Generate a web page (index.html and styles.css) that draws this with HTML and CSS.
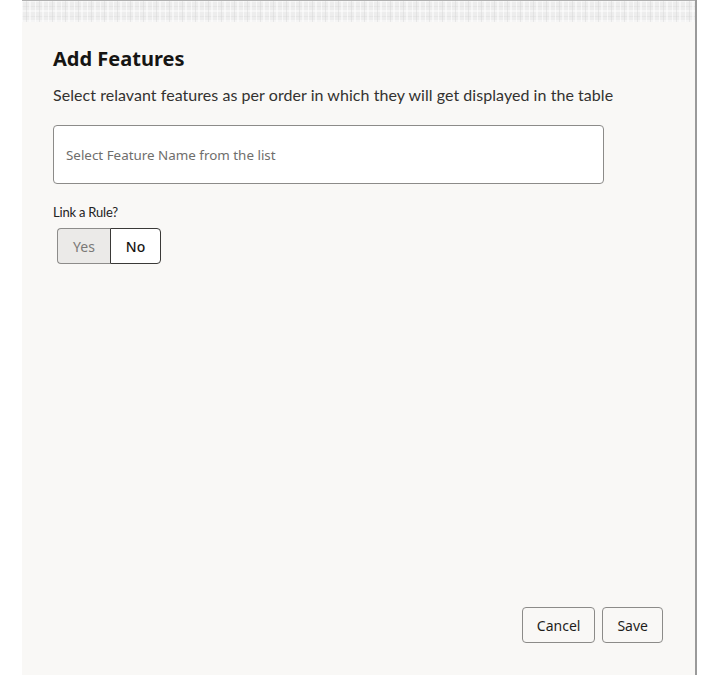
FILE: index.html
```html
<!doctype html>
<html>
<head>
<meta charset="utf-8">
<meta name="viewport" content="width=device-width, initial-scale=1">
<title>Add Features</title>
<link rel="stylesheet" href="styles.css">
</head>

<body>
<div class="panel">
	<div class="topband"></div>
	<div class="content">
		<h1>Add Features</h1>
		<p class="intro">Select relavant features as per order in which they will get displayed in the table</p>

		<div class="field">
			<input type="text" placeholder="Select Feature Name from the list">
		</div>

		<div class="label">Link a Rule?</div>
		<div class="toggle">
			<button class="seg off">Yes</button>
			<button class="seg on">No</button>
		</div>
	</div>

	<div class="footer">
		<button class="btn">Cancel</button>
		<button class="btn">Save</button>
	</div>
</div>
</body>
</html>
```

FILE: styles.css
```css
html, body{
	margin:0;
	padding:0;
	height:100%;
	background-color:#fff;
	}
body{
	font-family:"Noto Sans", "Open Sans", Arial, sans-serif;
	color:#161513;
	overflow:hidden;
	}
.panel{
	margin-left:22px;
	width:673px;
	height:675px;
	background-color:#f9f8f6;
	border-right:2px solid #9a9a9a;
	display:flex;
	flex-direction:column;
	}
.topband{
	height:21px;
	border-top:1px solid #b0b0b0;
	background-color:#ededed;
	background-image:
		repeating-linear-gradient(90deg, rgba(255,255,255,.6) 0 1px, transparent 1px 4px, rgba(210,210,210,.4) 4px 5px, transparent 5px 7px, rgba(255,255,255,.5) 7px 9px, transparent 9px 13px),
		repeating-linear-gradient(0deg, rgba(255,255,255,.45) 0 2px, transparent 2px 5px, rgba(215,215,215,.35) 5px 6px, transparent 6px 10px);
	}
.content{
	padding:0 31px;
	flex:1;
	}
h1{
	margin:24px 0 0 0;
	font-size:20px;
	font-weight:700;
	line-height:26px;
	}
.intro{
	margin:12px 0 0 0;
	font-family:"Lato", "Noto Sans", sans-serif;
	font-size:16px;
	letter-spacing:0.05px;
	line-height:22px;
	color:#333230;
	}
.field{
	margin-top:19px;
	}
.field input{
	width:551px;
	height:59px;
	box-sizing:border-box;
	border:1px solid #8c8b89;
	border-radius:4px;
	background:#fff;
	padding:0 12px;
	font-family:"Noto Sans", sans-serif;
	font-size:13.4px;
	outline:0;
	}
.field input::placeholder{
	color:#6f6e6c;
	}
.label{
	margin-top:20px;
	font-family:"Lato", sans-serif;
	font-size:13px;
	letter-spacing:-0.2px;
	color:#222;
	line-height:16px;
	}
.toggle{
	display:flex;
	margin:8px 0 0 4px;
	}
.seg{
	height:36px;
	font-family:"Noto Sans", sans-serif;
	font-size:14px;
	border:1px solid #6d6c6a;
	cursor:pointer;
	padding:0;
	}
.seg.off{
	width:53px;
	background:#ebeae8;
	color:#7a7977;
	border-color:#8d8c8a;
	border-radius:4px 0 0 4px;
	border-right:none;
	}
.seg.on{
	width:51px;
	background:#fff;
	color:#161513;
	font-weight:500;
	border-color:#3a3937;
	border-radius:0 4px 4px 0;
	}
.footer{
	display:flex;
	justify-content:flex-end;
	gap:7px;
	padding:0 32px 32px 0;
	}
.btn{
	height:36px;
	padding:0 14px;
	background:#f9f8f6;
	border:1px solid #8c8b89;
	border-radius:4px;
	font-family:"Noto Sans", sans-serif;
	font-size:14px;
	color:#1f1e1c;
	cursor:pointer;
	}
```
